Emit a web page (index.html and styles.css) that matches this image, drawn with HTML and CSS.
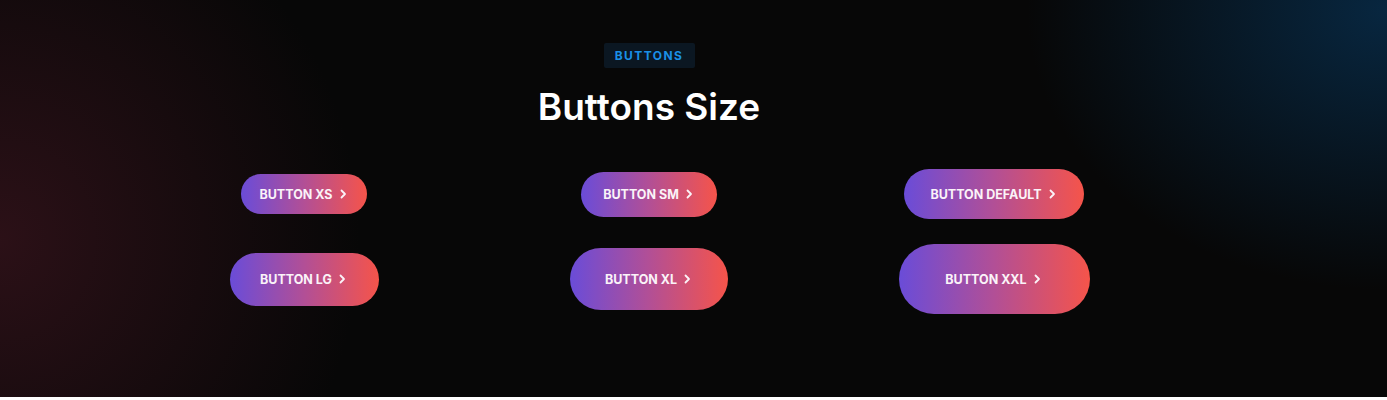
FILE: index.html
```html
<!DOCTYPE html>
<html lang="en">
<head>
<meta charset="utf-8">
<title>Buttons Size</title>
<link rel="stylesheet" href="styles.css">
</head>
<body>
<section class="section">
  <div class="inner">
    <span class="badge">BUTTONS</span>
    <h2 class="title">Buttons Size</h2>
    <div class="grid">
      <div class="cell"><a class="btn btn-xs" href="#">BUTTON XS<svg class="chev" viewBox="0 0 12 12"><path d="M4.5 2.5L8 6L4.5 9.5"/></svg></a></div>
      <div class="cell"><a class="btn btn-sm" href="#">BUTTON SM<svg class="chev" viewBox="0 0 12 12"><path d="M4.5 2.5L8 6L4.5 9.5"/></svg></a></div>
      <div class="cell"><a class="btn btn-default" href="#">BUTTON DEFAULT<svg class="chev" viewBox="0 0 12 12"><path d="M4.5 2.5L8 6L4.5 9.5"/></svg></a></div>
      <div class="cell"><a class="btn btn-lg" href="#">BUTTON LG<svg class="chev" viewBox="0 0 12 12"><path d="M4.5 2.5L8 6L4.5 9.5"/></svg></a></div>
      <div class="cell"><a class="btn btn-xl" href="#">BUTTON XL<svg class="chev" viewBox="0 0 12 12"><path d="M4.5 2.5L8 6L4.5 9.5"/></svg></a></div>
      <div class="cell"><a class="btn btn-xxl" href="#">BUTTON XXL<svg class="chev" viewBox="0 0 12 12"><path d="M4.5 2.5L8 6L4.5 9.5"/></svg></a></div>
    </div>
  </div>
</section>
</body>
</html>
```
FILE: styles.css
```css
* { box-sizing: border-box; }
html, body { margin: 0; padding: 0; background: #ffffff; }
body { font-family: Inter, "Noto Sans", "Liberation Sans", sans-serif; }

.section {
  height: 397px;
  background-color: #070707;
  background-image:
    radial-gradient(ellipse 360px 380px at 0px 240px, rgba(50, 18, 26, 0.85), rgba(50, 18, 26, 0) 100%),
    radial-gradient(ellipse 360px 280px at 1387px 10px, rgba(8, 52, 88, 0.7), rgba(8, 52, 88, 0) 100%);
  padding: 43px 89px 0 0;
}

.inner {
  display: flex;
  flex-direction: column;
  align-items: center;
}

.badge {
  display: inline-flex;
  align-items: center;
  justify-content: center;
  width: 91px;
  height: 25px;
  background: #0b1722;
  color: #1a8fe6;
  font-size: 12px;
  font-weight: 700;
  letter-spacing: 1.4px;
  border-radius: 2px;
}

.title {
  margin: 17px 0 0;
  color: #ffffff;
  font-size: 37px;
  line-height: 44px;
  font-weight: 600;
}

.grid {
  margin-top: 40px;
  width: 1035px;
  display: grid;
  grid-template-columns: repeat(3, 1fr);
  grid-template-rows: 50px 70px;
  row-gap: 25px;
}

.cell {
  display: flex;
  align-items: center;
  justify-content: center;
}

.btn {
  display: inline-flex;
  align-items: center;
  justify-content: center;
  border-radius: 999px;
  background: linear-gradient(90deg, #6a4cd8 0%, #b24f96 50%, #f5544a 100%);
  color: #fbf3f8;
  text-decoration: none;
  font-size: 12.5px;
  font-weight: 700;
  white-space: nowrap;
}

.chev {
  width: 12px;
  height: 12px;
  margin-left: 4px;
  fill: none;
  stroke: #fbf3f8;
  stroke-width: 1.8;
  stroke-linecap: round;
  stroke-linejoin: round;
}

.btn-xs { width: 126px; height: 40px; }
.btn-sm { width: 136px; height: 45px; }
.btn-default { width: 180px; height: 50px; }
.btn-lg { width: 149px; height: 53px; }
.btn-xl { width: 158px; height: 62px; }
.btn-xxl { width: 191px; height: 70px; }
```
